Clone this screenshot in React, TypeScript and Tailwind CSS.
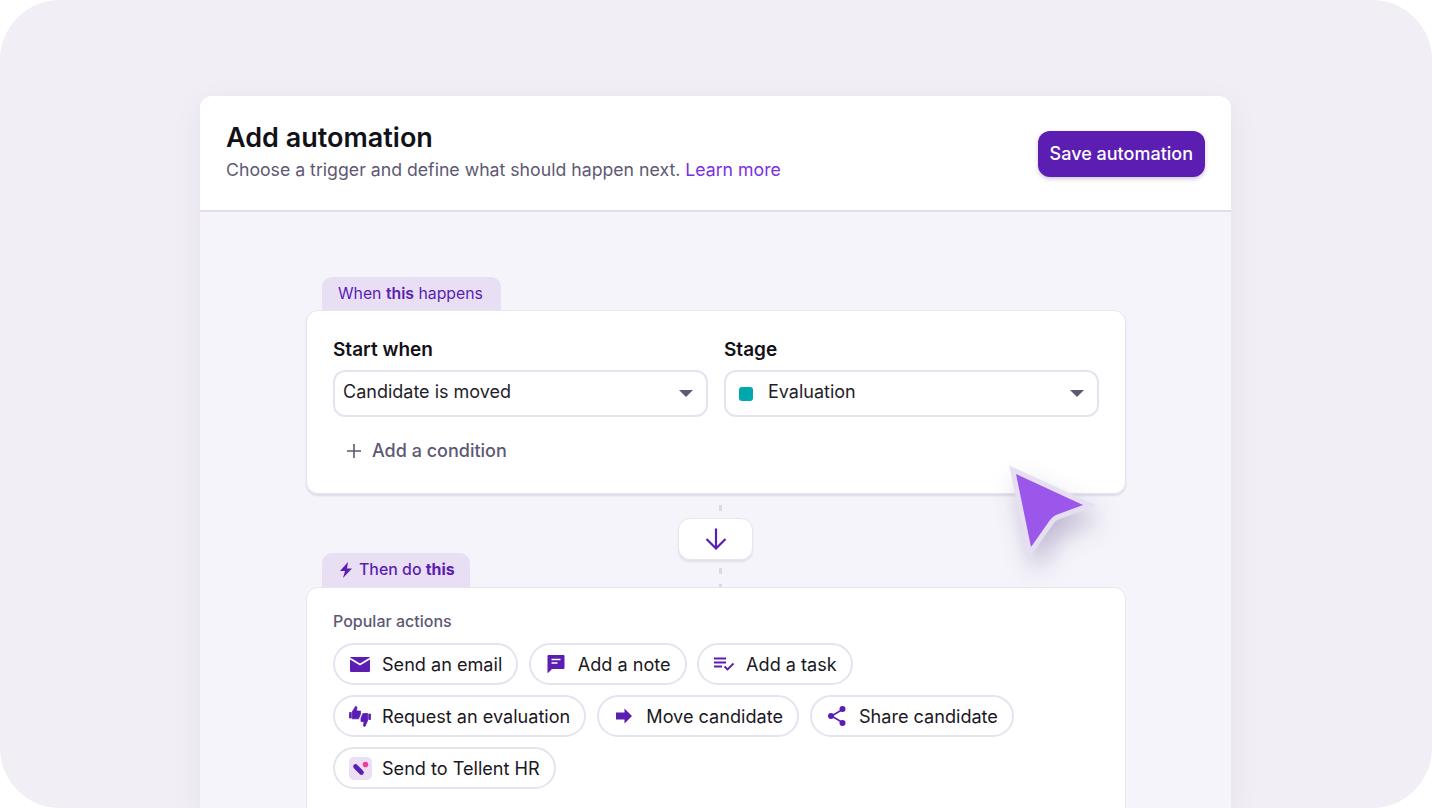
import React from "react";

const font = { fontFamily: "Inter, 'Liberation Sans', sans-serif" };

function MailIcon() {
	return (
		<svg width="22" height="18" viewBox="0 0 22 18">
			<rect x="1" y="2" width="20" height="15" rx="1.2" fill="#5b1db2" />
			<path d="M1 3.5 L11 9.5 L21 3.5" fill="none" stroke="#fff" strokeWidth="1.7" />
		</svg>
	);
}

function NoteIcon() {
	return (
		<svg width="20" height="20" viewBox="0 0 20 20">
			<path d="M2 1.5 H18 V14.5 H6 L2 18.5 Z" fill="#5b1db2" stroke="#5b1db2" strokeLinejoin="round" />
			<path d="M5.5 5.5 H14.5 M5.5 9 H11.5" stroke="#fff" strokeWidth="1.6" />
		</svg>
	);
}

function TaskIcon() {
	return (
		<svg width="22" height="16" viewBox="0 0 22 16">
			<path d="M1 2.5 H13 M1 6.5 H13 M1 10.5 H9" stroke="#5b1db2" strokeWidth="1.8" fill="none" />
			<path d="M11.5 10.5 L14.5 13.5 L20.5 7.5" stroke="#5b1db2" strokeWidth="1.8" fill="none" />
		</svg>
	);
}

function ThumbsIcon() {
	return (
		<svg width="22" height="21" viewBox="0 0 22 21">
			<path d="M0.5 6.5 H2.2 V12 H0.5 Z M3.2 6 L6.5 0.5 L8 1 L7.5 5 H11.5 V8 L9.5 12.8 H3.2 Z" fill="#5b1db2" stroke="#5b1db2" strokeWidth="0.8" strokeLinejoin="round" />
			<path d="M21.5 13.5 H19.8 V8 H21.5 Z M18.8 14 L16 20.5 L14.5 20 L15 15.5 H12 V12 L14 7.5 H18.8 Z" fill="#5b1db2" stroke="#5b1db2" strokeWidth="0.8" strokeLinejoin="round" />
		</svg>
	);
}

function MoveIcon() {
	return (
		<svg width="22" height="18" viewBox="0 0 22 18">
			<path d="M3 5.5 H11.5 V1.5 L19 9 L11.5 16.5 V12.5 H3 Z" fill="#5b1db2" />
		</svg>
	);
}

function ShareIcon() {
	return (
		<svg width="22" height="22" viewBox="0 0 22 22">
			<path d="M16.5 4.5 L5.5 11 L16.5 17.5" fill="none" stroke="#5b1db2" strokeWidth="1.6" />
			<circle cx="16.5" cy="4" r="3" fill="#5b1db2" />
			<circle cx="5" cy="11" r="3" fill="#5b1db2" />
			<circle cx="16.5" cy="18" r="3" fill="#5b1db2" />
		</svg>
	);
}

function TellentIcon() {
	return (
		<svg width="23" height="23" viewBox="0 0 23 23">
			<rect width="23" height="23" rx="5" fill="#ecdff5" />
			<path d="M6.5 9.5 L12.5 15.5" stroke="#5b1db2" strokeWidth="4.6" strokeLinecap="round" />
			<circle cx="16.5" cy="7.5" r="2.8" fill="#ec3d9a" />
		</svg>
	);
}

function Caret() {
	return (
		<svg width="14" height="7" viewBox="0 0 14 7" className="shrink-0">
			<path d="M0 0 H14 L7 7 Z" fill="#5e5873" />
		</svg>
	);
}

function Chip({ icon, label }: { icon: React.ReactNode; label: string }) {
	return (
		<div className="h-[42px] flex items-center rounded-full bg-white border-2 border-[#e6e3f0] pl-[13px] pr-[14px] text-[18.1px] text-[#1a1822]">
			<span className="w-[24px] flex items-center justify-center mr-[10px]">{icon}</span>
			<span className="pt-[1px]">{label}</span>
		</div>
	);
}

function Select({ children }: { children: React.ReactNode }) {
	return (
		<div className="h-[47px] flex items-center justify-between rounded-[12px] border-2 border-[#e6e3f0] bg-white pl-[8px] pr-[13px] text-[18px] text-[#1f1d29]">
			<div className="flex items-center pb-[4px]">{children}</div>
			<Caret />
		</div>
	);
}

export default function App() {
	return (
		<div className="w-[1432px] h-[808px] bg-white" style={font}>
			<div className="relative h-full overflow-hidden rounded-[60px] bg-[#f1eef6] pt-[96px]">
				<div className="ml-[200px] w-[1031px] h-[712px] flex flex-col rounded-t-[12px] overflow-hidden bg-[#f5f4fa] shadow-[0_8px_32px_rgba(60,40,110,0.06)]">
					<div className="h-[116px] shrink-0 flex items-center justify-between bg-white border-b-2 border-[#e2dfeb] px-[26px]">
						<div>
							<h1 className="text-[27px] leading-[34px] font-semibold text-[#131118]">Add automation</h1>
							<p className="text-[17.7px] leading-[30px] text-[#5e5873]">
								Choose a trigger and define what should happen next.{" "}
								<span className="text-[#7a2ee6]">Learn more</span>
							</p>
						</div>
						<button className="h-[46px] px-[12px] pb-[1px] mt-[2px] rounded-[12px] bg-[#5b1db2] text-white text-[18px] font-medium shadow-[0_2px_4px_rgba(60,30,120,0.25)]">
							Save automation
						</button>
					</div>

					<div className="pl-[106px] pr-[105px] pt-[65px]">
						<div className="ml-[16px] w-fit h-[34px] flex items-center pl-[16px] pr-[18px] rounded-t-[10px] bg-[#e9dff5] text-[15.8px] text-[#5b1db2]">
							<span>
								When <b className="font-semibold">this</b> happens
							</span>
						</div>
						<div className="h-[184px] -mt-[1px] rounded-[12px] bg-white border border-[#e8e5f1] shadow-[0_2px_2px_rgba(60,40,110,0.12)] px-[26px] pt-[25px]">
							<div className="grid grid-cols-2 gap-x-[16px]">
								<div>
									<div className="text-[19px] leading-[28px] font-semibold text-[#131118] mb-[6px]">Start when</div>
									<Select>Candidate is moved</Select>
								</div>
								<div>
									<div className="text-[19px] leading-[28px] font-semibold text-[#131118] mb-[6px]">Stage</div>
									<Select>
										<span className="w-[14px] h-[14px] rounded-[3px] bg-[#00a8ae] ml-[5px] mr-[15px] mt-[4px]" />
										Evaluation
									</Select>
								</div>
							</div>
							<div className="flex items-center mt-[20px] pl-[14px] text-[18px] font-medium text-[#5e5873]">
								<svg width="14" height="14" viewBox="0 0 14 14" className="mr-[11px]">
									<path d="M7 0 V14 M0 7 H14" stroke="#5e5873" strokeWidth="1.6" />
								</svg>
								Add a condition
							</div>
						</div>

						<div className="relative h-[93px]">
							<div className="absolute left-[413px] top-[11px] w-[3px] h-[6px] bg-[#dcd9e6]" />
							<div className="absolute left-[413px] top-[74px] w-[3px] h-[6px] bg-[#dcd9e6]" />
							<div className="absolute left-[413px] top-[90px] w-[3px] h-[3px] bg-[#dcd9e6]" />
							<div className="absolute left-[372px] top-[24px] w-[75px] h-[42px] flex items-center justify-center rounded-[12px] bg-white border border-[#e8e5f1] shadow-[0_2px_2px_rgba(60,40,110,0.1)]">
								<svg width="22" height="22" viewBox="0 0 22 22">
									<path d="M11 0.5 V20 M1.5 11 L11 20.5 L20.5 11" fill="none" stroke="#5b1db2" strokeWidth="2.2" />
								</svg>
							</div>
							<div className="absolute left-[16px] bottom-0 h-[34px] flex items-center pl-[17px] pr-[15px] rounded-t-[10px] bg-[#e9dff5] text-[15.9px] font-medium text-[#5b1db2]">
								<svg width="14" height="16" viewBox="0 0 14 16" className="mr-[6px]">
									<path d="M9 0 L1 9 H6 L4 16 L13 6.5 H8 Z" fill="#5b1db2" />
								</svg>
								<span>
									Then do <b className="font-bold">this</b>
								</span>
							</div>
						</div>

						<div className="h-[300px] rounded-[12px] bg-white border border-[#e8e5f1] px-[26px] pt-[23px]">
							<div className="text-[16px] leading-[20px] font-medium text-[#5e5873] mb-[12px]">Popular actions</div>
							<div className="flex flex-col gap-[10px]">
								<div className="flex gap-[10.5px]">
									<Chip icon={<MailIcon />} label="Send an email" />
									<Chip icon={<NoteIcon />} label="Add a note" />
									<Chip icon={<TaskIcon />} label="Add a task" />
								</div>
								<div className="flex gap-[11px]">
									<Chip icon={<ThumbsIcon />} label="Request an evaluation" />
									<Chip icon={<MoveIcon />} label="Move candidate" />
									<Chip icon={<ShareIcon />} label="Share candidate" />
								</div>
								<div className="flex gap-[11px]">
									<Chip icon={<TellentIcon />} label="Send to Tellent HR" />
								</div>
							</div>
						</div>
					</div>
				</div>

				{/* pointer lies over the first panel */}
				<svg
					width="110"
					height="120"
					viewBox="0 0 110 120"
					className="absolute left-[1000px] top-[455px] drop-shadow-[6px_14px_12px_rgba(60,40,110,0.28)]"
				>
					<path
						d="M16 19 L83 50 L56 60 Q52 62 50 65 L31 92 Z"
						fill="#9b57ea"
						stroke="#e6dff3"
						strokeWidth="10"
						strokeLinejoin="miter"
						strokeMiterlimit="8"
						paintOrder="stroke"
					/>
				</svg>
			</div>
		</div>
	);
}
